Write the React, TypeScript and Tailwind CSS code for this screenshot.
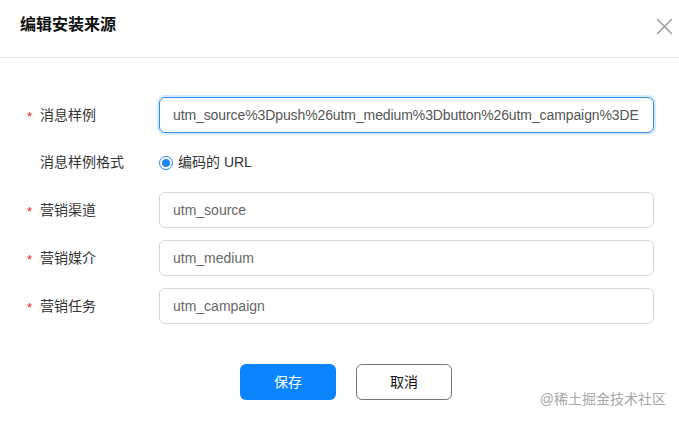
const cjk = { fontFamily: '"Liberation Sans", "Noto Sans CJK SC", sans-serif' };

function Label({ text, required }: { text: string; required?: boolean }) {
    return (
        <div className="flex w-[159px] shrink-0 items-center pl-[27px] text-[14px] text-[#333]">
            <span className="w-[13px] pt-[3px] text-[13px] text-[#e02020]">{required ? '*' : ''}</span>
            <span>{text}</span>
        </div>
    );
}

function Field({ label, value, focused }: { label: string; value: string; focused?: boolean }) {
    return (
        <div className="flex h-[36px] items-center">
            <Label text={label} required />
            <div
                className={
                    focused
                        ? 'flex h-[36px] w-[495px] items-center overflow-hidden rounded-[6px] border border-[#2b8cf0] px-[13px] text-[14px] tracking-[-0.1px] whitespace-nowrap text-[#555] shadow-[0_0_0_2px_rgba(43,140,240,0.18)]'
                        : 'flex h-[36px] w-[495px] items-center overflow-hidden rounded-[6px] border border-[#d6d6d6] px-[13px] text-[14px] whitespace-nowrap text-[#666]'
                }
            >
                {value}
            </div>
        </div>
    );
}

export default function App() {
    return (
        <div className="relative h-[422px] w-[679px] overflow-hidden bg-white" style={cjk}>
            <div className="flex h-[58px] items-start justify-between border-b border-[#e8e8e8] pt-[15px] pr-[6px] pl-[20px]">
                <span className="text-[16px] leading-[20px] font-bold text-[#111]">编辑安装来源</span>
                <svg className="mt-[3px] h-[17px] w-[17px] text-[#9a9a9a]" viewBox="0 0 16 16" fill="none" stroke="currentColor" strokeWidth={1.4}>
                    <path d="M1 1L15 15M15 1L1 15" />
                </svg>
            </div>

            <div className="flex flex-col gap-[12px] pt-[39px]">
                <Field label="消息样例" value="utm_source%3Dpush%26utm_medium%3Dbutton%26utm_campaign%3DE" focused />
                <div className="flex h-[35px] items-center">
                    <Label text="消息样例格式" />
                    <div className="flex items-center gap-[5px] text-[14px] text-[#333]">
                        <span className="flex h-[14px] w-[14px] items-center justify-center rounded-full border border-[#1f86f5]">
                            <span className="h-[8px] w-[8px] rounded-full bg-[#1f86f5]" />
                        </span>
                        <span>编码的 URL</span>
                    </div>
                </div>
                <Field label="营销渠道" value="utm_source" />
                <Field label="营销媒介" value="utm_medium" />
                <Field label="营销任务" value="utm_campaign" />
            </div>

            <div className="flex gap-[20px] pt-[40px] pl-[240px]">
                <button className="h-[36px] w-[96px] rounded-[6px] bg-[#0a84ff] text-[14px] text-white">保存</button>
                <button className="h-[36px] w-[96px] rounded-[6px] border border-[#777] bg-white text-[14px] text-[#111]">取消</button>
            </div>

            <div className="absolute right-[13px] bottom-[12px] text-[14px] text-[#a8a8a8]">@稀土掘金技术社区</div>
        </div>
    );
}
